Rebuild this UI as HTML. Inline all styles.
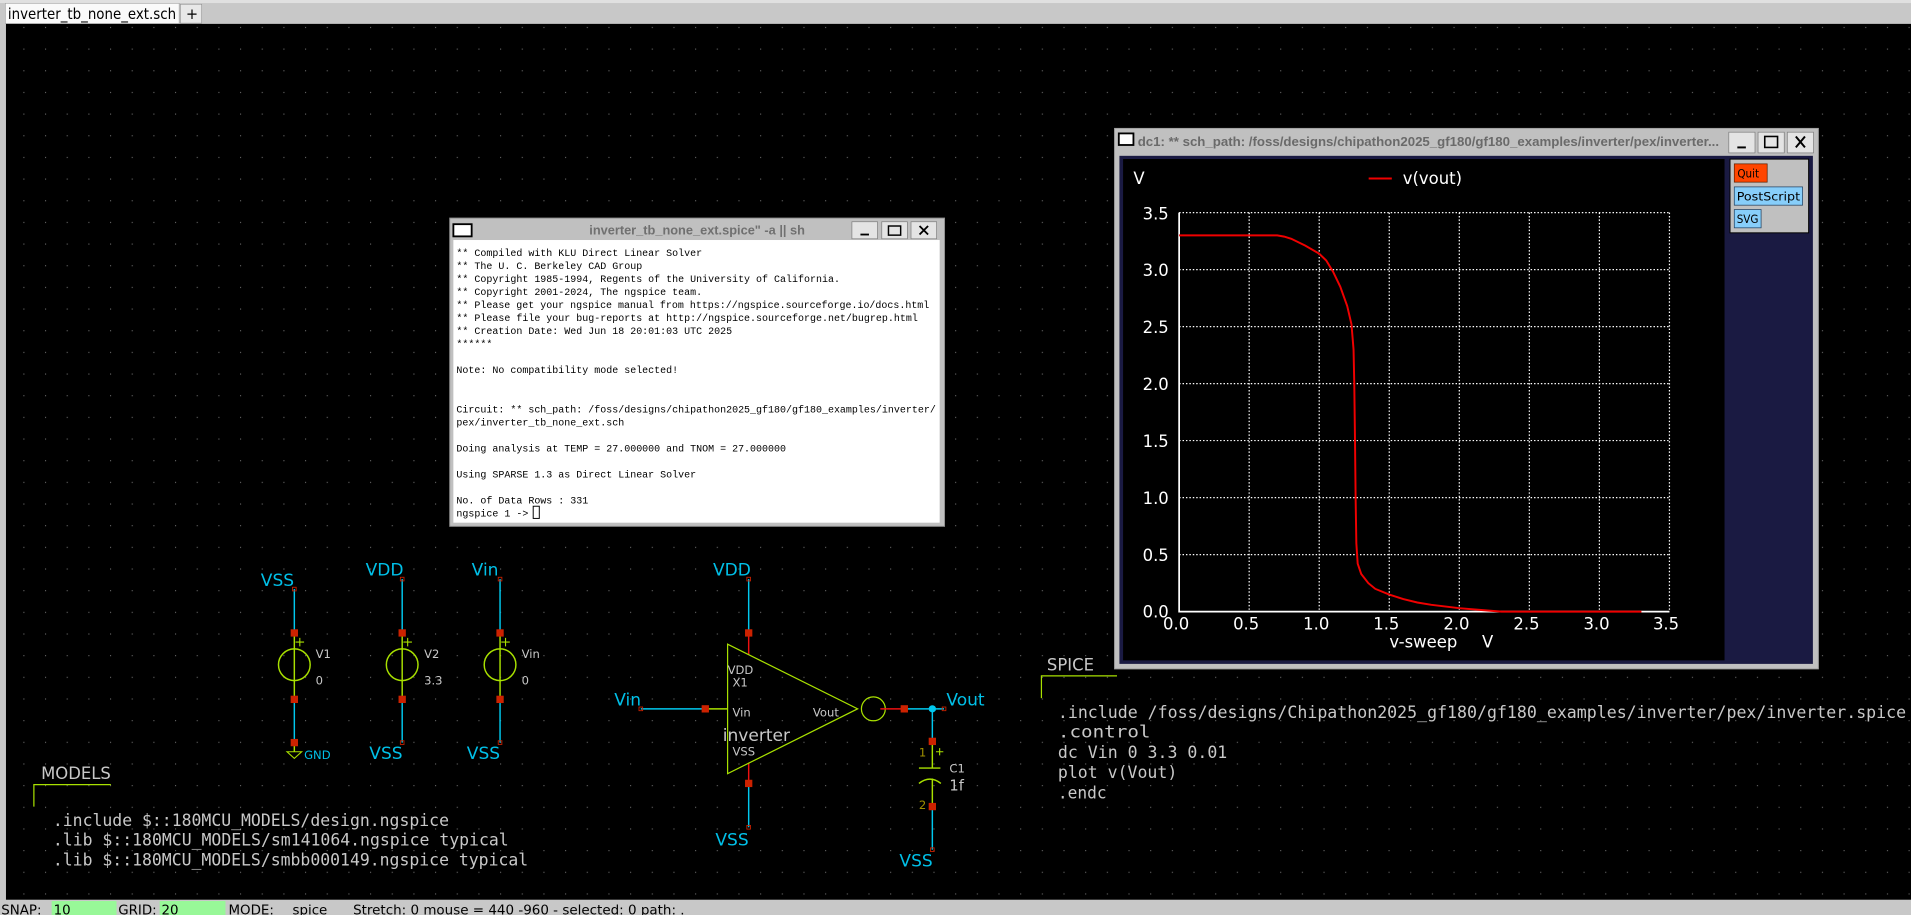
<!DOCTYPE html>
<html><head><meta charset="utf-8"><style>
html,body{margin:0;padding:0;background:#000;overflow:hidden}
svg{display:block}
</style></head><body>
<svg width="1911" height="915" viewBox="0 0 1568 751" preserveAspectRatio="none" xmlns="http://www.w3.org/2000/svg">
<defs>
<pattern id="g" x="1.36" y="4.3" width="17.78" height="17.78" patternUnits="userSpaceOnUse">
<rect x="0" y="0" width="0.9" height="0.9" fill="#6a6a6a"/>
</pattern>
</defs>
<rect x="0" y="0" width="1568" height="751" fill="#c8c8c8"/>
<rect x="4.9" y="19.6" width="1563.1" height="719" fill="#000"/>
<rect x="4.9" y="19.6" width="1563.1" height="719" fill="url(#g)"/>
<rect x="0" y="0" width="1568" height="2.5" fill="#e0e0e0"/>
<rect x="4.4" y="2.7" width="142.6" height="16.6" fill="#fafafa" stroke="#a0a0a0" stroke-width="0.5"/>
<text x="6.5" y="15.5" font-family="DejaVu Sans, sans-serif" font-size="12.2" fill="#000" textLength="138" lengthAdjust="spacingAndGlyphs">inverter_tb_none_ext.sch</text>
<rect x="148" y="3.5" width="17.5" height="15.5" fill="#e8e8e8" stroke="#909090" stroke-width="0.5"/>
<text x="152.5" y="15.5" font-family="DejaVu Sans, sans-serif" font-size="12" fill="#000">+</text>
<rect x="0" y="738.5" width="1568" height="12.5" fill="#c8c8c8"/>
<rect x="42.4" y="739.5" width="53.2" height="11.5" fill="#98f898"/>
<rect x="131" y="739.5" width="54" height="11.5" fill="#98f898"/>
<g font-family="DejaVu Sans, sans-serif" font-size="11" fill="#000">
<text x="1" y="750.5">SNAP:</text>
<text x="44" y="750.5">10</text>
<text x="97" y="750.5">GRID:</text>
<text x="132.5" y="750.5">20</text>
<text x="187.5" y="750.5">MODE:</text>
<text x="240" y="750.5">spice</text>
<text x="289.7" y="750.5" textLength="272" lengthAdjust="spacingAndGlyphs">Stretch: 0  mouse = 440 -960 - selected: 0 path: .</text>
</g>

<g stroke-width="1.2" fill="none">
<line x1="241.5" y1="483.5" x2="241.5" y2="519.5" stroke="#00c8ee"/>
<line x1="241.5" y1="519.5" x2="241.5" y2="574" stroke="#a8e000"/>
<circle cx="241.5" cy="545.6" r="13" stroke="#a8e000"/>
<line x1="241.5" y1="574" x2="241.5" y2="609.5" stroke="#00c8ee"/>
<line x1="241.5" y1="609.5" x2="241.5" y2="617" stroke="#a8e000"/>
<path d="M235.5 617 H247.5 L241.5 622.5 Z" stroke="#a8e000" stroke-width="0.9"/>
<line x1="330" y1="475.3" x2="330" y2="519.5" stroke="#00c8ee"/>
<line x1="330" y1="519.5" x2="330" y2="574" stroke="#a8e000"/>
<circle cx="330" cy="545.6" r="13" stroke="#a8e000"/>
<line x1="330" y1="574" x2="330" y2="609.5" stroke="#00c8ee"/>
<line x1="410.3" y1="475.3" x2="410.3" y2="519.5" stroke="#00c8ee"/>
<line x1="410.3" y1="519.5" x2="410.3" y2="574" stroke="#a8e000"/>
<circle cx="410.3" cy="545.6" r="13" stroke="#a8e000"/>
<line x1="410.3" y1="574" x2="410.3" y2="609.5" stroke="#00c8ee"/>
<path d="M242.5 527 h7 M246 523.5 v7 M331 527 h7 M334.5 523.5 v7 M411.3 527 h7 M414.8 523.5 v7" stroke="#a8e000" stroke-width="0.9"/>
</g>
<g fill="#cc2200">
<rect x="238.5" y="516.5" width="6" height="6"/><rect x="238.5" y="571" width="6" height="6"/><rect x="238.5" y="606.5" width="6" height="6"/>
<rect x="327" y="516.5" width="6" height="6"/><rect x="327" y="571" width="6" height="6"/>
<rect x="407.3" y="516.5" width="6" height="6"/><rect x="407.3" y="571" width="6" height="6"/>
</g>
<g fill="none" stroke="#cc2200" stroke-width="0.7">
<rect x="240" y="482" width="3" height="3"/><rect x="328.5" y="473.8" width="3" height="3"/><rect x="408.8" y="473.8" width="3" height="3"/>
<rect x="328.5" y="608" width="3" height="3"/><rect x="408.8" y="608" width="3" height="3"/>
</g>
<g font-family="DejaVu Sans, sans-serif" fill="#00c0e8" font-size="14">
<text x="214" y="481">VSS</text>
<text x="300" y="472.5">VDD</text>
<text x="387" y="472.5">Vin</text>
<text x="303" y="623">VSS</text>
<text x="383" y="623">VSS</text>
<text x="504" y="579">Vin</text>
<text x="585" y="472.5">VDD</text>
<text x="776.5" y="579">Vout</text>
<text x="587" y="694">VSS</text>
<text x="738" y="711">VSS</text>
<text x="249.5" y="623" font-size="9.5">GND</text>
</g>
<g font-family="DejaVu Sans, sans-serif" fill="#c8c8c8" font-size="9.5">
<text x="259" y="540">V1</text><text x="259" y="562">0</text>
<text x="348" y="540">V2</text><text x="348" y="562">3.3</text>
<text x="428" y="540">Vin</text><text x="428" y="562">0</text>
</g>

<g stroke-width="1.2" fill="none">
<line x1="614.3" y1="475.3" x2="614.3" y2="519.5" stroke="#00c8ee"/>
<line x1="614.3" y1="519.5" x2="614.3" y2="537" stroke="#ee1010"/>
<line x1="614.3" y1="626" x2="614.3" y2="643" stroke="#ee1010"/>
<line x1="614.3" y1="643" x2="614.3" y2="679" stroke="#00c8ee"/>
<path d="M597 528.7 L703.7 581.8 L597 635 Z" stroke="#a8e000" stroke-width="1"/>
<circle cx="716.6" cy="581.8" r="9.8" stroke="#a8e000" stroke-width="1"/>
<line x1="525.8" y1="581.8" x2="578.7" y2="581.8" stroke="#00c8ee"/>
<line x1="578.7" y1="581.8" x2="597" y2="581.8" stroke="#a8e000"/>
<line x1="722.3" y1="581.8" x2="742" y2="581.8" stroke="#ee1010"/>
<line x1="742" y1="581.8" x2="774.6" y2="581.8" stroke="#00c8ee"/>
<line x1="765" y1="581.8" x2="765" y2="608.5" stroke="#00c8ee"/>
<line x1="765" y1="608.5" x2="765" y2="630.4" stroke="#a8e000"/>
<line x1="754" y1="630.4" x2="771.6" y2="630.4" stroke="#a8e000"/>
<path d="M754 643 Q763 636 772 643" stroke="#a8e000"/>
<line x1="765" y1="639" x2="765" y2="662" stroke="#a8e000"/>
<line x1="765" y1="662" x2="765" y2="697.4" stroke="#00c8ee"/>
<path d="M768 617 h6 M771 614 v6" stroke="#a8e000" stroke-width="0.9"/>
</g>
<circle cx="765" cy="581.8" r="3" fill="#00c8ee"/>
<g fill="#cc2200">
<rect x="611.3" y="516.5" width="6" height="6"/><rect x="611.3" y="640" width="6" height="6"/>
<rect x="575.7" y="578.8" width="6" height="6"/><rect x="739" y="578.8" width="6" height="6"/>
<rect x="762" y="605.5" width="6" height="6"/><rect x="762" y="659" width="6" height="6"/>
</g>
<g fill="none" stroke="#cc2200" stroke-width="0.7">
<rect x="612.8" y="473.8" width="3" height="3"/><rect x="612.8" y="677.5" width="3" height="3"/>
<rect x="524.3" y="580.3" width="3" height="3"/><rect x="773.1" y="580.3" width="3" height="3"/>
<rect x="763.5" y="695.9" width="3" height="3"/>
</g>
<g font-family="DejaVu Sans, sans-serif" fill="#c8c8c8" font-size="9.5">
<text x="597" y="553">VDD</text>
<text x="601" y="563.5">X1</text>
<text x="601" y="588">Vin</text>
<text x="667" y="588">Vout</text>
<text x="601" y="620">VSS</text>
<text x="593" y="608" font-size="14">inverter</text>
<text x="779" y="634">C1</text>
<text x="779" y="649" font-size="12">1f</text>
</g>
<g font-family="DejaVu Sans, sans-serif" fill="#a09000" font-size="9.5">
<text x="754" y="621">1</text><text x="754" y="664">2</text>
</g>

<text x="33.7" y="639.5" font-family="DejaVu Sans, sans-serif" font-size="13.5" fill="#c8c8c8">MODELS</text>
<path d="M27.8 662 V644 H91" stroke="#a8e000" stroke-width="1" fill="none"/>
<g font-family="DejaVu Sans Mono, monospace" font-size="13.5" fill="#c8c8c8">
<text x="43.4" y="678" textLength="325" lengthAdjust="spacingAndGlyphs">.include $::180MCU_MODELS/design.ngspice</text>
<text x="43.4" y="694" textLength="374" lengthAdjust="spacingAndGlyphs">.lib $::180MCU_MODELS/sm141064.ngspice typical</text>
<text x="43.4" y="710.5" textLength="390" lengthAdjust="spacingAndGlyphs">.lib $::180MCU_MODELS/smbb000149.ngspice typical</text>
</g>
<text x="859" y="550.5" font-family="DejaVu Sans, sans-serif" font-size="13.5" fill="#c8c8c8">SPICE</text>
<path d="M854.5 573 V554.7 H916.5" stroke="#a8e000" stroke-width="1" fill="none"/>
<g font-family="DejaVu Sans Mono, monospace" font-size="14" fill="#c8c8c8">
<text x="868" y="589.5" textLength="696" lengthAdjust="spacingAndGlyphs">.include /foss/designs/Chipathon2025_gf180/gf180_examples/inverter/pex/inverter.spice</text>
<text x="868" y="605.5" textLength="76" lengthAdjust="spacingAndGlyphs">.control</text>
<text x="868" y="622" textLength="139" lengthAdjust="spacingAndGlyphs">dc Vin 0 3.3 0.01</text>
<text x="868" y="638.5" textLength="98" lengthAdjust="spacingAndGlyphs">plot v(Vout)</text>
<text x="868" y="655.5" textLength="40" lengthAdjust="spacingAndGlyphs">.endc</text>
</g>

<rect x="369" y="179" width="406" height="253" fill="#c0c0c0" stroke="#909090" stroke-width="0.8"/>
<rect x="372" y="184" width="15" height="10" fill="#fff" stroke="#000" stroke-width="1.5"/>
<text x="572" y="192.5" text-anchor="middle" font-family="Liberation Sans, sans-serif" font-weight="bold" font-size="10.5" fill="#707070">inverter_tb_none_ext.spice" -a || sh</text>
<g fill="#e4e4e4" stroke="#808080" stroke-width="0.6">
<rect x="699" y="182" width="21" height="14"/><rect x="723.5" y="182" width="21" height="14"/><rect x="747.5" y="182" width="21" height="14"/>
</g>
<path d="M706 192.5 h7" stroke="#000" stroke-width="1.5"/>
<rect x="729" y="185.5" width="10" height="7.5" fill="none" stroke="#000" stroke-width="1.2"/>
<path d="M754.5 185.5 l7 7 M761.5 185.5 l-7 7" stroke="#000" stroke-width="1.5"/>
<rect x="372" y="197" width="399" height="232" fill="#fff"/>
<g font-family="Liberation Mono, DejaVu Sans Mono, monospace" font-size="8.2" fill="#000">
<text x="374.5" y="210">** Compiled with KLU Direct Linear Solver</text>
<text x="374.5" y="220.7">** The U. C. Berkeley CAD Group</text>
<text x="374.5" y="231.4">** Copyright 1985-1994, Regents of the University of California.</text>
<text x="374.5" y="242.1">** Copyright 2001-2024, The ngspice team.</text>
<text x="374.5" y="252.8" textLength="388" lengthAdjust="spacingAndGlyphs">** Please get your ngspice manual from https://ngspice.sourceforge.io/docs.html</text>
<text x="374.5" y="263.5">** Please file your bug-reports at http://ngspice.sourceforge.net/bugrep.html</text>
<text x="374.5" y="274.2">** Creation Date: Wed Jun 18 20:01:03 UTC 2025</text>
<text x="374.5" y="284.9">******</text>
<text x="374.5" y="306.3">Note: No compatibility mode selected!</text>
<text x="374.5" y="338.4">Circuit: ** sch_path: /foss/designs/chipathon2025_gf180/gf180_examples/inverter/</text>
<text x="374.5" y="349.1">pex/inverter_tb_none_ext.sch</text>
<text x="374.5" y="370.5">Doing analysis at TEMP = 27.000000 and TNOM = 27.000000</text>
<text x="374.5" y="391.9">Using SPARSE 1.3 as Direct Linear Solver</text>
<text x="374.5" y="413.3">No. of Data Rows : 331</text>
<text x="374.5" y="424">ngspice 1 -&gt;</text>
</g>
<rect x="437.5" y="415.5" width="5" height="10" fill="none" stroke="#000" stroke-width="0.8"/>

<rect x="914.5" y="105.4" width="577.5" height="443.6" fill="#c0c0c0" stroke="#a0a0a0" stroke-width="0.8"/>
<rect x="918" y="109.5" width="12" height="9.5" fill="#fff" stroke="#000" stroke-width="1.5"/>
<text x="933.5" y="120" font-family="Liberation Sans, sans-serif" font-weight="bold" font-size="10.5" fill="#6a6a6a" textLength="477" lengthAdjust="spacingAndGlyphs">dc1: ** sch_path: /foss/designs/chipathon2025_gf180/gf180_examples/inverter/pex/inverter...</text>
<g fill="#e4e4e4" stroke="#808080" stroke-width="0.6">
<rect x="1418.5" y="108.5" width="21.5" height="17"/><rect x="1442.5" y="108.5" width="21.5" height="17"/><rect x="1466.5" y="108.5" width="21.5" height="17"/>
</g>
<path d="M1425.5 121 h7" stroke="#000" stroke-width="1.6"/>
<rect x="1448" y="112" width="10.5" height="9" fill="none" stroke="#000" stroke-width="1.3"/>
<path d="M1473.5 112 l7.5 9 M1481 112 l-7.5 9" stroke="#000" stroke-width="1.6"/>
<rect x="918.5" y="127.9" width="569" height="417" fill="#1a1a42"/>
<rect x="921.5" y="130.5" width="493.5" height="411.5" fill="#000"/>
<rect x="1419.5" y="130.6" width="64.5" height="60.5" fill="#c0c0c0" stroke="#000" stroke-width="0.8"/>
<rect x="1423" y="134.5" width="27" height="15" fill="#ff4500" stroke="#602000" stroke-width="0.6"/>
<rect x="1423" y="153.4" width="56" height="15" fill="#87cefa" stroke="#204060" stroke-width="0.6"/>
<rect x="1423" y="172" width="22" height="15" fill="#87cefa" stroke="#204060" stroke-width="0.6"/>
<g font-family="DejaVu Sans Condensed, DejaVu Sans, sans-serif" font-size="9.5" fill="#000">
<text x="1425.5" y="145.5">Quit</text>
<text x="1425" y="164.5" textLength="52" lengthAdjust="spacingAndGlyphs">PostScript</text>
<text x="1425" y="183">SVG</text>
</g>
<g stroke="#fff" stroke-width="1" stroke-dasharray="1.2 1.6" fill="none">
<path d="M1024.97 174.5V502 M1082.44 174.5V502 M1139.91 174.5V502 M1197.38 174.5V502 M1254.85 174.5V502 M1312.32 174.5V502 M1369.8 174.5V502"/>
<path d="M967.5 174.5H1369.8 M967.5 221.3H1369.8 M967.5 268.1H1369.8 M967.5 314.9H1369.8 M967.5 361.6H1369.8 M967.5 408.4H1369.8 M967.5 455.2H1369.8"/>
</g>
<path d="M967.5 174.5V502H1369.8" stroke="#fff" stroke-width="1.4" fill="none"/>
<path d="M967.5 193.2 L1048 193.2 L1053.7 194.2 L1059.5 196 L1071 201.6 L1082.4 208.2 L1088.2 213.8 L1093.9 223.2 L1099.7 235.3 L1105.4 251.2 L1108.9 266.2 L1110.6 286.8 L1111.2 314.9 L1111.8 361.6 L1112.3 408.4 L1112.9 445.9 L1114 462.7 L1116.9 471.1 L1122.7 478.6 L1128.4 483.3 L1139.9 488 L1151.4 491.7 L1162.9 494.5 L1174.4 496.4 L1197.4 499.2 L1220.4 501.1 L1231.9 502 L1346.8 502" stroke="#f00000" stroke-width="1.6" fill="none"/>
<path d="M1123 146.5 h19" stroke="#f00000" stroke-width="1.6"/>
<g font-family="DejaVu Sans, sans-serif" font-size="13.5" fill="#fff">
<text x="930" y="151">V</text>
<text x="1151" y="151">v(vout)</text>
<g text-anchor="end">
<text x="959" y="180">3.5</text><text x="959" y="226.5">3.0</text><text x="959" y="273.5">2.5</text><text x="959" y="320">2.0</text>
<text x="959" y="367">1.5</text><text x="959" y="413.5">1.0</text><text x="959" y="460.5">0.5</text><text x="959" y="507">0.0</text>
</g>
<g text-anchor="middle">
<text x="965" y="516.5">0.0</text><text x="1022.5" y="516.5">0.5</text><text x="1080" y="516.5">1.0</text><text x="1137.5" y="516.5">1.5</text>
<text x="1195" y="516.5">2.0</text><text x="1252.5" y="516.5">2.5</text><text x="1310" y="516.5">3.0</text><text x="1367" y="516.5">3.5</text>
</g>
<text x="1140" y="531.5">v-sweep</text>
<text x="1216" y="531.5">V</text>
</g>
</svg>
</body></html>
